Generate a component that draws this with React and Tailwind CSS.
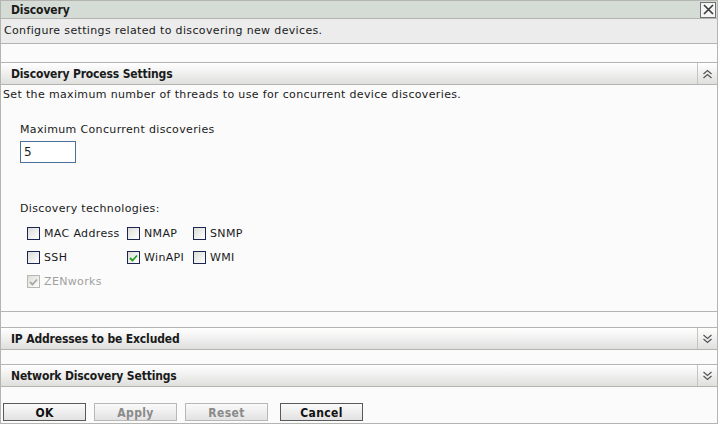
import React from "react";

const font = { fontFamily: '"DejaVu Sans", Verdana, sans-serif' };
const bold = { fontFamily: '"DejaVu Sans Condensed", "DejaVu Sans", sans-serif' };

function Chevrons({ up }) {
  return (
    <svg width="11" height="10" viewBox="0 0 11 10" className="text-[#555]">
      {up ? (
        <g fill="none" stroke="currentColor" strokeWidth="1.2">
          <path d="M1.5 5 L5.5 1.5 L9.5 5" />
          <path d="M1.5 9 L5.5 5.5 L9.5 9" />
        </g>
      ) : (
        <g fill="none" stroke="currentColor" strokeWidth="1.2">
          <path d="M1.5 1 L5.5 4.5 L9.5 1" />
          <path d="M1.5 5 L5.5 8.5 L9.5 5" />
        </g>
      )}
    </svg>
  );
}

function SectionHeader({ title, up }) {
  return (
    <div className="flex h-[22px] border-b border-[#b4b4b0] bg-gradient-to-b from-[#ffffff] to-[#dfe0de]">
      <div
        style={bold}
        className="flex-1 pl-[10px] flex items-center text-[12px] font-bold text-[#1a1a1a] tracking-[-0.15px]"
      >
        {title}
      </div>
      <div className="w-[20px] border-l border-[#c4c4c0] flex items-center justify-center">
        <Chevrons up={up} />
      </div>
    </div>
  );
}

function Check({ checked, disabled, label }) {
  return (
    <label className="flex items-center gap-[4px] h-[24px]">
      <span
        className={
          "w-[13px] h-[13px] border flex items-center justify-center bg-gradient-to-br from-[#dcdcd8] to-[#ffffff] " +
          (disabled ? "border-[#b8b8b4]" : "border-[#1c2652]")
        }
      >
        {checked && (
          <svg width="9" height="8" viewBox="0 0 9 8">
            <path
              d="M1 4 L3.5 6.5 L8 1.5"
              fill="none"
              stroke={disabled ? "#a8a8a4" : "#21a121"}
              strokeWidth="1.8"
            />
          </svg>
        )}
      </span>
      <span className={disabled ? "text-[#a0a0a0]" : "text-[#1a1a1a]"}>{label}</span>
    </label>
  );
}

function Btn({ children, disabled }) {
  return (
    <button
      style={bold}
      className={
        "h-[18px] w-[83px] border text-[12px] font-bold bg-gradient-to-b from-[#fafafa] to-[#e2e2e2] " +
        (disabled ? "border-[#b8b8b8] text-[#8a8a8a]" : "border-[#5a5a5a] text-[#111]")
      }
    >
      {children}
    </button>
  );
}

export default function App() {
  return (
    <div
      style={font}
      className="w-[718px] h-[424px] bg-[#fbfbfb] text-[11px] tracking-[0.35px] text-[#1a1a1a] border-l border-r border-b border-[#b4b4b0] flex flex-col overflow-hidden"
    >
      <div className="h-[19px] flex border-t border-b border-[#b4b4b0] bg-[#d5dcd5]">
        <div style={bold} className="flex-1 pl-[10px] flex items-center text-[12px] font-bold tracking-[-0.1px]">
          Discovery
        </div>
        <div className="pr-[1px] flex items-center">
          <div className="w-[16px] h-[16px] border border-[#707070] bg-[#f4f4f4] flex items-center justify-center">
            <svg width="11" height="11" viewBox="0 0 11 11">
              <path d="M1 1 L10 10 M10 1 L1 10" stroke="#3a3a3a" strokeWidth="1.6" />
            </svg>
          </div>
        </div>
      </div>
      <div className="h-[25px] pl-[3px] flex items-center bg-[#ececec] border-b border-[#b4b4b0]">
        Configure settings related to discovering new devices.
      </div>
      <div className="h-[19px] border-b border-[#b4b4b0]" />
      <SectionHeader title="Discovery Process Settings" up />
      <div className="h-[227px] border-b border-[#b4b4b0] flex flex-col">
        <div className="pl-[2px] pt-[2px]">
          Set the maximum number of threads to use for concurrent device discoveries.
        </div>
        <div className="pl-[19px] pt-[18px]">Maximum Concurrent discoveries</div>
        <div className="pl-[19px] pt-[3px]">
          <div className="w-[56px] h-[22px] border border-[#4a7197] bg-white pl-[3px] flex items-center text-[12px]">
            5
          </div>
        </div>
        <div className="pl-[19px] pt-[38px]">Discovery technologies:</div>
        <div className="pl-[26px] pt-[4px] grid grid-cols-[100px_66px_60px] leading-none">
          <Check label="MAC Address" />
          <Check label="NMAP" />
          <Check label="SNMP" />
          <Check label="SSH" />
          <Check label="WinAPI" checked />
          <Check label="WMI" />
          <Check label="ZENworks" checked disabled />
        </div>
      </div>
      <div className="h-[16px] border-b border-[#b4b4b0]" />
      <SectionHeader title="IP Addresses to be Excluded" />
      <div className="h-[15px] border-b border-[#b4b4b0]" />
      <SectionHeader title="Network Discovery Settings" />
      <div className="flex-1 flex items-start pt-[16px] pl-[2px]">
        <div className="flex gap-[8px]">
          <Btn>OK</Btn>
          <Btn disabled>Apply</Btn>
          <Btn disabled>Reset</Btn>
        </div>
        <div className="ml-[12px]">
          <Btn>Cancel</Btn>
        </div>
      </div>
    </div>
  );
}
